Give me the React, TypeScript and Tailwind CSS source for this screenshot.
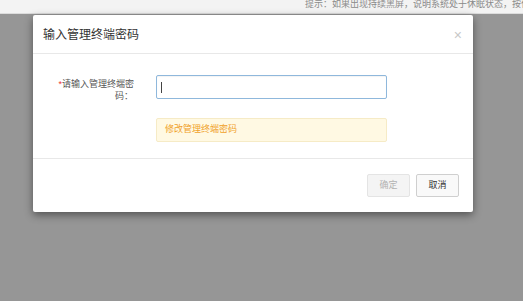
const App = () => {
  return (
    <div
      className="w-[523px] h-[301px] overflow-hidden bg-[#969696]"
      style={{ fontFamily: '"Liberation Sans", "Noto Sans CJK SC", sans-serif' }}
    >
      <div className="h-[14px] bg-[#f3f3f3] border-b border-[#dcdcdc] flex items-start pl-[305px] overflow-hidden">
        <span className="text-[9px] leading-[9px] text-[#8a8a8a] whitespace-nowrap">
          提示：如果出现持续黑屏，说明系统处于休眠状态，按任意键唤醒
        </span>
      </div>

      <div className="ml-[33px] mt-[1px] w-[440px] h-[197px] bg-white rounded-[2px] shadow-[0_3px_8px_rgba(0,0,0,0.45)] flex flex-col">
        <div className="h-[39px] border-b border-[#e8e8e8] flex items-center justify-between pl-[10px] pr-[11px] pt-[1px]">
          <span className="text-[12px] text-[#333]">输入管理终端密码</span>
          <span className="text-[14px] leading-none text-[#c8c8c8]">×</span>
        </div>

        <div className="flex-1 flex pt-[21px]">
          <div className="w-[101px] text-right text-[9px] leading-[12px] text-[#555] pt-[3px]">
            <div>
              <span className="text-[#e33]">*</span>请输入管理终端密
            </div>
            <div className="pr-[1px]">码：</div>
          </div>
          <div className="ml-[22px] flex flex-col gap-[19px]">
            <div className="w-[231px] h-[24px] border border-[#8fb8dc] rounded-[2px] flex items-center pl-[4px] shadow-[inset_0_1px_1px_rgba(0,0,0,0.05)]">
              <div className="w-[1px] h-[11px] bg-[#444]" />
            </div>
            <div className="w-[231px] h-[24px] bg-[#fff9e3] border border-[#f6ebc6] rounded-[2px] flex items-center pl-[8px]">
              <span className="text-[9px] text-[#f0a12a]">修改管理终端密码</span>
            </div>
          </div>
        </div>

        <div className="h-[54px] border-t border-[#e8e8e8] flex items-center justify-end gap-[6px] pr-[14px]">
          <button className="w-[43px] h-[23px] border border-[#e4e4e4] bg-[#f4f4f4] text-[9px] text-[#b2b2b2] rounded-[2px]">
            确定
          </button>
          <button className="w-[43px] h-[23px] border border-[#cfcfcf] bg-[#f9f9f9] text-[9px] text-[#333] rounded-[2px]">
            取消
          </button>
        </div>
      </div>
    </div>
  );
};

export default App;
